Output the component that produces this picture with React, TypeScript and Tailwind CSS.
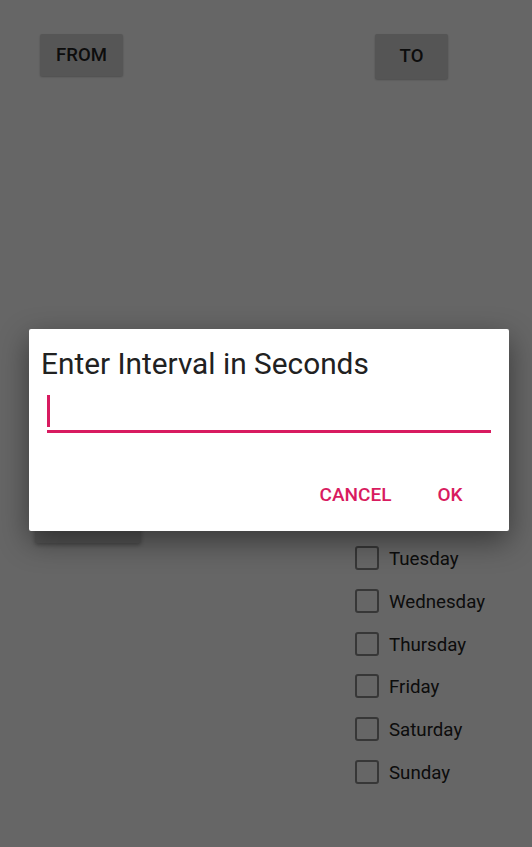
import React from "react";

const days = ["Monday", "Tuesday", "Wednesday", "Thursday", "Friday", "Saturday", "Sunday"];

function Checkbox({ label }: { label: string }) {
  return (
    <div className="flex h-[42.67px] items-center">
      <div className="h-[24px] w-[24px] rounded-[3px] border-[2.5px] border-[#8a8a8a]" />
      <span className="ml-[10px] pt-[2px] text-[18.7px] text-[#222]">{label}</span>
    </div>
  );
}

export default function App() {
  return (
    <div className="relative h-[847px] w-[532px] overflow-hidden bg-white font-['Roboto',sans-serif]">
      <div className="h-[494.5px] pt-[34px]">
        <div className="flex items-start justify-between pl-[40px] pr-[84px]">
          <button className="flex h-[42px] w-[83px] items-center justify-center rounded-[2px] bg-[#d8d8d8] pt-[1px] text-[18.5px] font-medium text-[#222] shadow-[0_1px_2px_rgba(0,0,0,0.25)]">
            FROM
          </button>
          <button className="flex h-[45px] w-[73px] items-center justify-center rounded-[2px] bg-[#d4d4d4] pt-[1px] text-[18.5px] font-medium text-[#222] shadow-[0_1px_2px_rgba(0,0,0,0.25)]">
            TO
          </button>
        </div>
      </div>
      <div className="flex">
        <div className="w-[355px] pl-[35px] pt-[4px]">
          <div className="h-[44px] w-[106px] rounded-[2px] bg-[#d4d4d4] shadow-[0_2px_4px_rgba(0,0,0,0.3)]" />
        </div>
        <div className="flex flex-col">
          {days.map((d) => (
            <Checkbox key={d} label={d} />
          ))}
        </div>
      </div>

      <div className="absolute inset-0 bg-black/60 pl-[29px] pt-[329px]">
        <div className="h-[202px] w-[480px] rounded-[2px] bg-white shadow-[0_10px_30px_rgba(0,0,0,0.45)]">
          <div className="px-[12px] pt-[18px] text-[29.8px] leading-[34px] text-[#212121]">
            Enter Interval in Seconds
          </div>
          <div className="mx-[18px] mt-[14px]">
            <div className="h-[32px]">
              <div className="h-[32px] w-[3px] bg-[#d81b60]" />
            </div>
            <div className="mt-[3px] h-[2.5px] bg-[#d81b60]" />
          </div>
          <div className="mt-[41px] flex justify-end pr-[12px]">
            <button className="flex h-[44px] w-[95px] items-center justify-center text-[19px] font-medium text-[#d81b60]">
              CANCEL
            </button>
            <button className="flex h-[44px] w-[94px] items-center justify-center text-[19px] font-medium text-[#d81b60]">
              OK
            </button>
          </div>
        </div>
      </div>
    </div>
  );
}
